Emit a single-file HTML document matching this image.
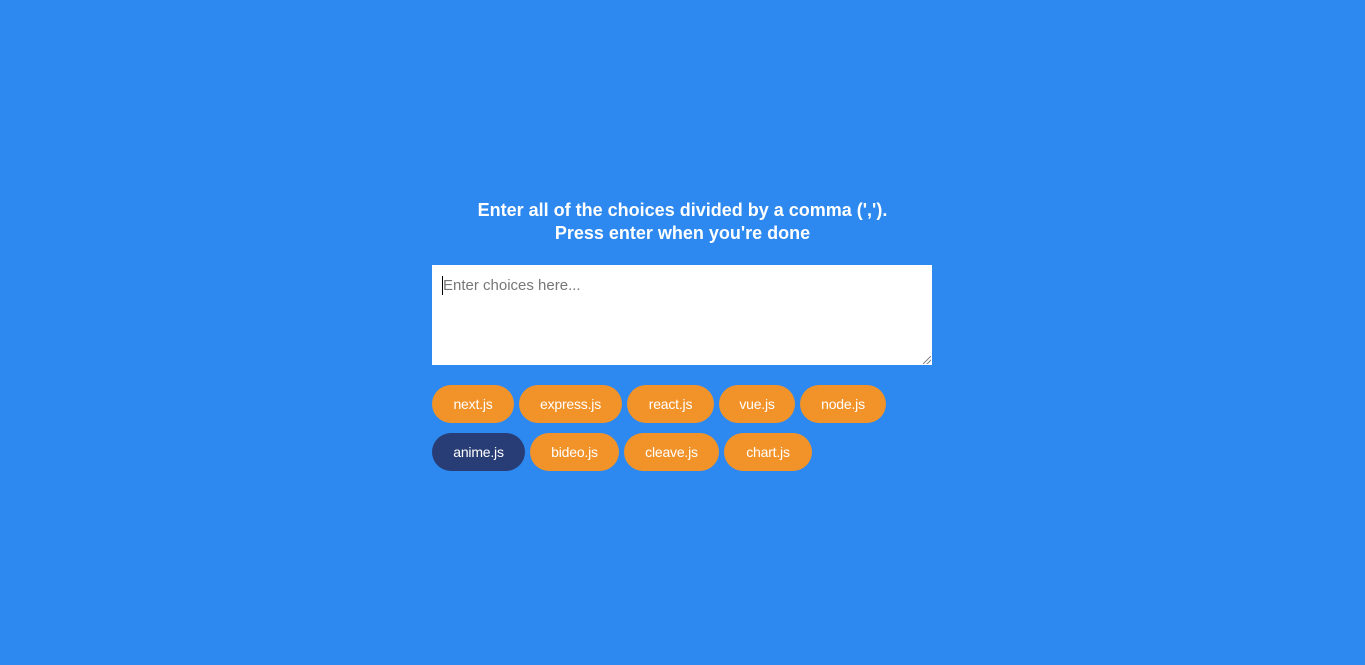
<!DOCTYPE html>
<html><head><style>
html,body{margin:0;padding:0;width:1365px;height:665px;background:#2d89ef;font-family:"Liberation Sans",sans-serif;overflow:hidden;position:relative}
h3{position:absolute;left:0;width:1365px;top:199px;margin:0;text-align:center;color:#fff;font-size:18px;font-weight:bold;line-height:23px;letter-spacing:0}
.ta{position:absolute;left:432px;top:265px;width:500px;height:100px;background:#fff}
.ta span{position:absolute;left:11px;top:12px;color:#777;font-size:15px}
.ta i{position:absolute;left:10px;top:11px;width:1px;height:19px;background:#000}
.ta b{position:absolute;right:1px;bottom:1px;width:8px;height:8px;background:linear-gradient(135deg,transparent 45%,#888 45%,#888 55%,transparent 55%,transparent 70%,#888 70%,#888 80%,transparent 80%)}
.t{position:absolute;height:38px;line-height:38px;border-radius:19px;background:#f2932a;color:#fff;font-size:14px;text-align:center;letter-spacing:-0.2px}
.n{background:#283d75}
</style></head><body>
<h3>Enter all of the choices divided by a comma (',').<br>Press enter when you're done</h3>
<div class="ta"><i></i><span>Enter choices here...</span><b></b></div>
<div class="t" style="left:432px;top:385px;width:82px">next.js</div>
<div class="t" style="left:519px;top:385px;width:103px">express.js</div>
<div class="t" style="left:627px;top:385px;width:87px">react.js</div>
<div class="t" style="left:719px;top:385px;width:76px">vue.js</div>
<div class="t" style="left:800px;top:385px;width:86px">node.js</div>
<div class="t n" style="left:432px;top:433px;width:93px">anime.js</div>
<div class="t" style="left:530px;top:433px;width:89px">bideo.js</div>
<div class="t" style="left:624px;top:433px;width:95px">cleave.js</div>
<div class="t" style="left:724px;top:433px;width:88px">chart.js</div>
</body></html>
